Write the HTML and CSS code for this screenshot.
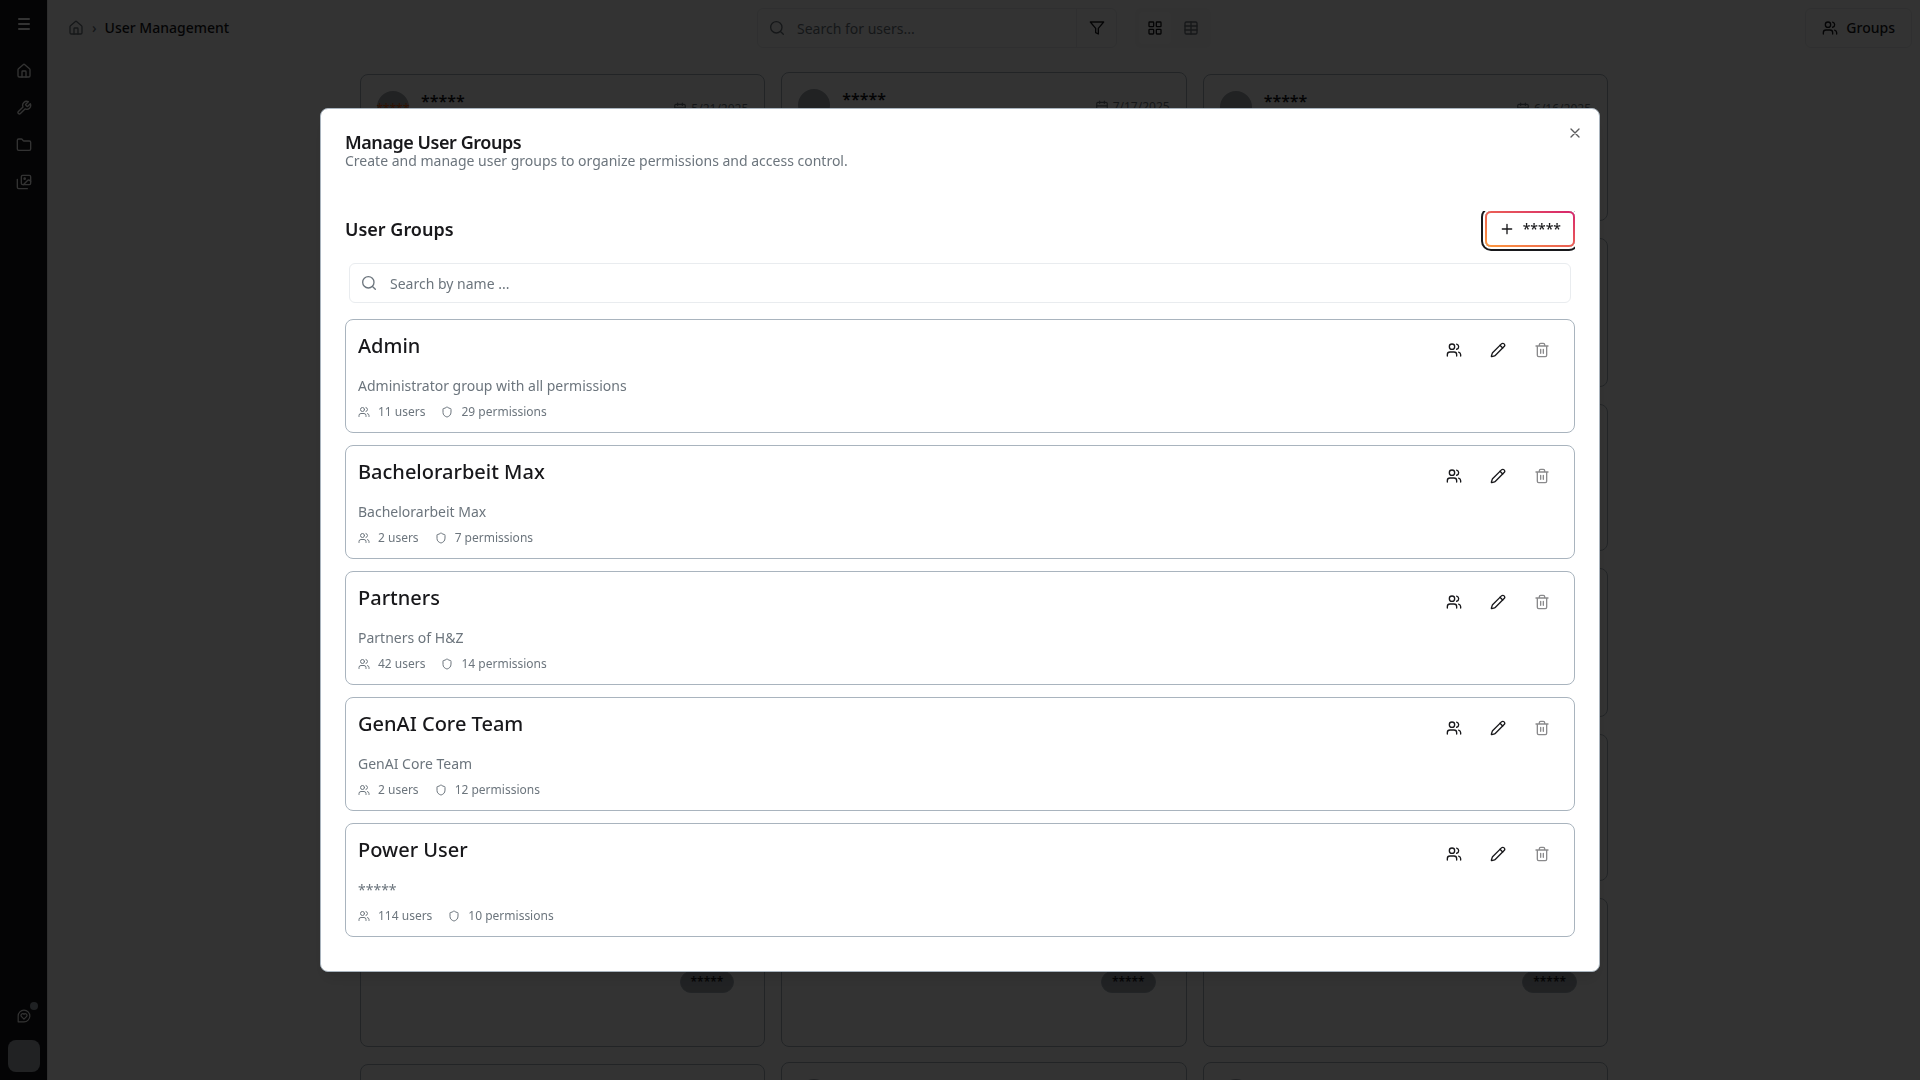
FILE: index.html
```html
<!DOCTYPE html>
<html lang="en">
<head>
<meta charset="utf-8">
<meta name="viewport" content="width=device-width, initial-scale=1">
<title>User Management</title>
<link rel="stylesheet" href="styles.css">
</head>
<body>
<svg class="sprite" aria-hidden="true">
  <symbol id="home" viewBox="0 0 24 24"><path d="M15 21v-8a1 1 0 0 0-1-1h-4a1 1 0 0 0-1 1v8"/><path d="M3 10a2 2 0 0 1 .709-1.528l7-5.999a2 2 0 0 1 2.582 0l7 5.999A2 2 0 0 1 21 10v9a2 2 0 0 1-2 2H5a2 2 0 0 1-2-2z"/></symbol>
  <symbol id="menu" viewBox="0 0 24 24"><path d="M4.500 4.500h15M4.500 12h15M4.500 19.500h15" stroke-width="3"/></symbol>
  <symbol id="wrench" viewBox="0 0 24 24"><path d="M14.700 6.300a1 1 0 0 0 0 1.400l1.600 1.600a1 1 0 0 0 1.400 0l3.770-3.770a6 6 0 0 1-7.940 7.940l-6.910 6.910a2.120 2.120 0 0 1-3-3l6.910-6.910a6 6 0 0 1 7.940-7.940l-3.760 3.760z"/></symbol>
  <symbol id="folder" viewBox="0 0 24 24"><path d="M20 20a2 2 0 0 0 2-2V8a2 2 0 0 0-2-2h-7.900a2 2 0 0 1-1.690-.9L9.600 3.900A2 2 0 0 0 7.930 3H4a2 2 0 0 0-2 2v13a2 2 0 0 0 2 2Z"/></symbol>
  <symbol id="images" viewBox="0 0 24 24"><path d="M17 22H4a2 2 0 0 1-2-2V8"/><rect x="8" y="2" width="14" height="14" rx="2"/><circle cx="13" cy="7" r="1"/><path d="m22 11-1.300-1.300a2.400 2.400 0 0 0-3.400 0L11 16"/></symbol>
  <symbol id="feedback" viewBox="0 0 24 24"><path d="M2 22V12a10 10 0 1 1 10 10z"/><path d="M12 17.500 7.800 13a2.800 2.800 0 0 1 4.200-4 2.800 2.800 0 0 1 4.200 4z"/></symbol>
  <symbol id="search" viewBox="0 0 24 24"><circle cx="11" cy="11" r="8.500"/><path d="m21.500 21.500-4.300-4.300"/></symbol>
  <symbol id="filter" viewBox="0 0 24 24"><path d="M22 3H2l8 9.460V19l4 2v-8.540z"/></symbol>
  <symbol id="grid" viewBox="0 0 24 24"><rect x="3" y="3" width="7" height="7" rx="1"/><rect x="14" y="3" width="7" height="7" rx="1"/><rect x="14" y="14" width="7" height="7" rx="1"/><rect x="3" y="14" width="7" height="7" rx="1"/></symbol>
  <symbol id="table" viewBox="0 0 24 24"><path d="M12 3v18M3 9h18M3 15h18"/><rect x="3" y="3" width="18" height="18" rx="2"/></symbol>
  <symbol id="users" viewBox="0 0 24 24"><path d="M16 21v-2a4 4 0 0 0-4-4H6a4 4 0 0 0-4 4v2"/><circle cx="9" cy="7" r="4"/><path d="M22 21v-2a4 4 0 0 0-3-3.870M16 3.130a4 4 0 0 1 0 7.750"/></symbol>
  <symbol id="calendar" viewBox="0 0 24 24"><path d="M8 2v4M16 2v4M3 10h18"/><rect x="3" y="4" width="18" height="18" rx="2"/></symbol>
  <symbol id="close" viewBox="0 0 24 24"><path d="M18 6 6 18M6 6l12 12"/></symbol>
  <symbol id="plus" viewBox="0 0 24 24"><path d="M5 12h14M12 5v14"/></symbol>
  <symbol id="pencil" viewBox="0 0 24 24"><path d="M21.174 6.812a1 1 0 0 0-3.986-3.987L3.842 16.174a2 2 0 0 0-.5.830l-1.321 4.352a.5.5 0 0 0 .623.622l4.353-1.320a2 2 0 0 0 .830-.497z"/><path d="m15 5 4 4"/></symbol>
  <symbol id="trash" viewBox="0 0 24 24"><path d="M3 6h18M19 6v14a2 2 0 0 1-2 2H7a2 2 0 0 1-2-2V6M8 6V4a2 2 0 0 1 2-2h4a2 2 0 0 1 2 2v2M10 11v6M14 11v6"/></symbol>
  <symbol id="shield" viewBox="0 0 24 24"><path d="M20 13c0 5-3.500 7.500-7.660 8.950a1 1 0 0 1-.670-.010C7.500 20.500 4 18 4 13V6a1 1 0 0 1 1-1c2 0 4.500-1.200 6.240-2.720a1.170 1.170 0 0 1 1.520 0C14.510 3.810 17 5 19 5a1 1 0 0 1 1 1z"/></symbol>
</svg>

<div class="app">
  <nav class="sidebar" aria-label="Main">
    <button class="side-link menu-toggle" aria-label="Menu"><svg class="icon"><use href="#menu"/></svg></button>
    <a class="side-link" href="#" aria-label="Home"><svg class="icon"><use href="#home"/></svg></a>
    <a class="side-link" href="#" aria-label="Tools"><svg class="icon"><use href="#wrench"/></svg></a>
    <a class="side-link" href="#" aria-label="Files"><svg class="icon"><use href="#folder"/></svg></a>
    <a class="side-link" href="#" aria-label="Images"><svg class="icon"><use href="#images"/></svg></a>
    <div class="side-bottom">
      <button class="side-link feedback" aria-label="Feedback"><svg class="icon icon-14"><use href="#feedback"/></svg><span class="dot"></span></button>
      <button class="account" aria-label="Account"></button>
    </div>
  </nav>

  <div class="page">
    <header class="topbar">
      <nav class="breadcrumb" aria-label="Breadcrumb">
        <a href="#" aria-label="Home"><svg class="icon"><use href="#home"/></svg></a>
        <span class="sep">›</span>
        <span class="current">User Management</span>
      </nav>
      <div class="tools">
        <div class="user-search">
          <svg class="icon"><use href="#search"/></svg>
          <input type="text" placeholder="Search for users..." aria-label="Search for users">
          <button class="filter" aria-label="Filter"><svg class="icon"><use href="#filter"/></svg></button>
        </div>
        <div class="view-toggle">
          <button class="active" aria-label="Grid view"><svg class="icon"><use href="#grid"/></svg></button>
          <button aria-label="Table view"><svg class="icon"><use href="#table"/></svg></button>
        </div>
      </div>
      <button class="groups-button"><svg class="icon"><use href="#users"/></svg>Groups</button>
    </header>

    <main class="user-grid">
      <article class="user-card"><div class="user-head"><span class="avatar">*****</span><span class="name">*****</span><span class="date"><svg class="icon icon-14"><use href="#calendar"/></svg>5/21/2025</span></div></article>
      <article class="user-card raised"><div class="user-head"><span class="avatar"></span><span class="name">*****</span><span class="date"><svg class="icon icon-14"><use href="#calendar"/></svg>7/17/2025</span></div></article>
      <article class="user-card"><div class="user-head"><span class="avatar"></span><span class="name">*****</span><span class="date"><svg class="icon icon-14"><use href="#calendar"/></svg>6/16/2025</span></div></article>
      <article class="user-card tall"></article><article class="user-card tall"></article><article class="user-card tall"></article>
      <article class="user-card"></article><article class="user-card"></article><article class="user-card"></article>
      <article class="user-card tall"></article><article class="user-card tall"></article><article class="user-card tall"></article>
      <article class="user-card"></article><article class="user-card"></article><article class="user-card"></article>
      <article class="user-card tall"><div class="user-head"></div><span class="badge">*****</span></article>
      <article class="user-card tall"><div class="user-head"></div><span class="badge">*****</span></article>
      <article class="user-card tall"><div class="user-head"></div><span class="badge">*****</span></article>
      <article class="user-card"><div class="user-head"><span class="avatar"></span></div></article>
      <article class="user-card raised"><div class="user-head"><span class="avatar"></span></div></article>
      <article class="user-card raised"><div class="user-head"><span class="avatar"></span></div></article>
    </main>
  </div>
</div>

<div class="overlay">
  <section class="dialog" role="dialog" aria-modal="true" aria-labelledby="dialog-title">
    <button class="close" aria-label="Close"><svg class="icon"><use href="#close"/></svg></button>
    <header class="dialog-head">
      <h2 id="dialog-title">Manage User Groups</h2>
      <p>Create and manage user groups to organize permissions and access control.</p>
    </header>
    <div class="dialog-body">
      <div class="section-head">
        <h3>User Groups</h3>
        <button class="add-button"><svg class="icon"><use href="#plus"/></svg>*****</button>
      </div>
      <div class="group-search">
        <svg class="icon"><use href="#search"/></svg>
        <input type="text" placeholder="Search by name ..." aria-label="Search by name">
      </div>
      <ul class="groups">
        <li class="group">
          <div class="info"><h4>Admin</h4><p>Administrator group with all permissions</p>
            <div class="stats"><span><svg class="icon icon-12"><use href="#users"/></svg>11 users</span><span><svg class="icon icon-12"><use href="#shield"/></svg>29 permissions</span></div></div>
          <div class="actions"><button aria-label="Members"><svg class="icon"><use href="#users"/></svg></button><button aria-label="Edit"><svg class="icon"><use href="#pencil"/></svg></button><button aria-label="Delete" disabled><svg class="icon"><use href="#trash"/></svg></button></div>
        </li>
        <li class="group">
          <div class="info"><h4>Bachelorarbeit Max</h4><p>Bachelorarbeit Max</p>
            <div class="stats"><span><svg class="icon icon-12"><use href="#users"/></svg>2 users</span><span><svg class="icon icon-12"><use href="#shield"/></svg>7 permissions</span></div></div>
          <div class="actions"><button aria-label="Members"><svg class="icon"><use href="#users"/></svg></button><button aria-label="Edit"><svg class="icon"><use href="#pencil"/></svg></button><button aria-label="Delete" disabled><svg class="icon"><use href="#trash"/></svg></button></div>
        </li>
        <li class="group">
          <div class="info"><h4>Partners</h4><p>Partners of H&amp;Z</p>
            <div class="stats"><span><svg class="icon icon-12"><use href="#users"/></svg>42 users</span><span><svg class="icon icon-12"><use href="#shield"/></svg>14 permissions</span></div></div>
          <div class="actions"><button aria-label="Members"><svg class="icon"><use href="#users"/></svg></button><button aria-label="Edit"><svg class="icon"><use href="#pencil"/></svg></button><button aria-label="Delete" disabled><svg class="icon"><use href="#trash"/></svg></button></div>
        </li>
        <li class="group">
          <div class="info"><h4>GenAI Core Team</h4><p>GenAI Core Team</p>
            <div class="stats"><span><svg class="icon icon-12"><use href="#users"/></svg>2 users</span><span><svg class="icon icon-12"><use href="#shield"/></svg>12 permissions</span></div></div>
          <div class="actions"><button aria-label="Members"><svg class="icon"><use href="#users"/></svg></button><button aria-label="Edit"><svg class="icon"><use href="#pencil"/></svg></button><button aria-label="Delete" disabled><svg class="icon"><use href="#trash"/></svg></button></div>
        </li>
        <li class="group">
          <div class="info"><h4>Power User</h4><p>*****</p>
            <div class="stats"><span><svg class="icon icon-12"><use href="#users"/></svg>114 users</span><span><svg class="icon icon-12"><use href="#shield"/></svg>10 permissions</span></div></div>
          <div class="actions"><button aria-label="Members"><svg class="icon"><use href="#users"/></svg></button><button aria-label="Edit"><svg class="icon"><use href="#pencil"/></svg></button><button aria-label="Delete" disabled><svg class="icon"><use href="#trash"/></svg></button></div>
        </li>
      </ul>
    </div>
  </section>
</div>
</body>
</html>
```
FILE: styles.css
```css
:root {
  --ink: #18181b;
  --muted: #6c757d;
  --line: #a9b4be;
  --line-soft: #e9ecef;
}

* { box-sizing: border-box; margin: 0; padding: 0; }

body {
  font: 14px/20px "Noto Sans", sans-serif;
  color: var(--ink);
  background: #fff;
  overflow: hidden;
}

button, input { font: inherit; color: inherit; background: none; border: 0; outline: 0; }
button { display: inline-flex; align-items: center; justify-content: center; cursor: pointer; }
a { color: inherit; text-decoration: none; }
ul { list-style: none; }
input::placeholder { color: var(--muted); opacity: 1; }

.sprite { display: none; }
.icon {
  flex: none;
  width: 16px;
  height: 16px;
  fill: none;
  stroke: currentColor;
  stroke-width: 2;
  stroke-linecap: round;
  stroke-linejoin: round;
}
.icon-14 { width: 14px; height: 14px; }
.icon-12 { width: 12px; height: 12px; }

/* Page shell */
.app { display: flex; height: 100vh; }

.sidebar {
  display: flex;
  flex-direction: column;
  align-items: center;
  gap: 5px;
  flex: none;
  width: 48px;
  padding: 8px 0;
  color: #fff;
  background: var(--ink);
  border-right: 1px solid #e4e4e7;
}
.side-link { display: flex; align-items: center; justify-content: center; width: 32px; height: 32px; }
.menu-toggle { margin-bottom: 10px; }
.side-bottom { display: flex; flex-direction: column; gap: 8px; margin-top: auto; }
.feedback { position: relative; }
.dot { position: absolute; top: 2px; right: 2px; width: 8px; height: 8px; border-radius: 50%; background: #9ca3af; }
.account { width: 32px; height: 32px; border-radius: 8px; background: #a3a9b0; }

.page { flex: 1; min-width: 0; overflow: hidden; }

.topbar { display: grid; grid-template-columns: 1fr auto 1fr; align-items: center; padding: 8px; }
.breadcrumb { display: flex; align-items: center; gap: 8px; padding-left: 12px; font-weight: 500; }
.breadcrumb a { display: flex; color: var(--muted); }
.sep { color: var(--muted); }

.tools { display: flex; gap: 18px; }
.user-search {
  display: flex;
  align-items: center;
  width: 360px;
  height: 40px;
  padding-left: 11px;
  border: 1px solid var(--line-soft);
  border-radius: 6px;
  color: var(--muted);
}
.user-search input { flex: 1; min-width: 0; padding: 2px 0 0 12px; }
.filter { width: 40px; height: 38px; border-left: 1px solid var(--line-soft); color: var(--ink); }
.view-toggle { display: flex; gap: 4px; padding: 4px; border-radius: 6px; background: #fafafa; color: var(--muted); }
.view-toggle button { width: 32px; height: 32px; border-radius: 4px; }
.view-toggle .active { background: #fff; color: var(--ink); }
.groups-button {
  justify-self: end;
  gap: 8px;
  height: 40px;
  padding: 0 16px;
  border: 1px solid var(--line-soft);
  border-radius: 6px;
  font-weight: 500;
}

/* User cards */
.user-grid {
  display: grid;
  grid-template-columns: repeat(3, 1fr);
  align-items: start;
  gap: 17px 16px;
  max-width: 1280px;
  margin: 0 auto;
  padding: 18px 16px;
}
.user-card { height: 147px; padding: 16px; border: 1px solid var(--line); border-radius: 8px; }
.user-card.tall { height: 149px; }
.user-card.raised { margin-top: -2px; }
.user-head { display: flex; gap: 12px; min-height: 32px; }
.avatar {
  display: flex;
  justify-content: center;
  flex: none;
  width: 32px;
  height: 32px;
  border-radius: 50%;
  background: #a3a9b0;
  color: #e8590c;
  font-size: 12px;
  line-height: 36px;
}
.name { font-size: 16px; line-height: 20px; font-weight: 600; }
.date { display: flex; align-items: center; gap: 4px; height: 16px; margin: 10px 0 0 auto; font-size: 12px; color: var(--muted); }
.badge {
  display: block;
  width: fit-content;
  margin: 24px 14px 0 auto;
  padding: 2px 10px;
  border: 1px solid var(--line);
  border-radius: 12px;
  background: #a3a9b0;
  font-size: 12px;
  line-height: 16px;
  font-weight: 600;
}

/* Dialog */
.overlay {
  position: fixed;
  inset: 0;
  display: flex;
  align-items: center;
  justify-content: center;
  background: rgb(0 0 0 / 80%);
}
.dialog {
  position: relative;
  display: flex;
  flex-direction: column;
  gap: 40px;
  width: 100%;
  max-width: 1280px;
  height: 80vh;
  padding: 24px;
  border: 1px solid var(--line);
  border-radius: 8px;
  background: #fff;
  box-shadow: 0 10px 15px -3px rgb(0 0 0 / 10%), 0 4px 6px -4px rgb(0 0 0 / 10%);
}
.close { position: absolute; top: 16px; right: 16px; opacity: .7; }
.dialog-head h2 { font-size: 18px; line-height: 18px; font-weight: 600; letter-spacing: -0.025em; }
.dialog-head p { color: var(--muted); }
.dialog-body { display: flex; flex-direction: column; gap: 16px; flex: 1; min-height: 0; overflow: auto; }

.section-head { display: flex; align-items: center; justify-content: space-between; }
.section-head h3 { font-size: 18px; line-height: 28px; font-weight: 600; }
.add-button {
  gap: 8px;
  height: 36px;
  padding: 0 12px;
  border: 2px solid transparent;
  border-radius: 6px;
  background: linear-gradient(#fff, #fff) padding-box, linear-gradient(to top right, #ff9a3c, #d6246e) border-box;
  box-shadow: 0 0 0 2px #fff, 0 0 0 4px var(--ink);
  font-weight: 500;
}

.group-search {
  display: flex;
  align-items: center;
  height: 40px;
  flex: none;
  margin: 0 4px;
  padding: 0 11px;
  border: 1px solid var(--line-soft);
  border-radius: 6px;
  color: var(--muted);
}
.group-search input { flex: 1; padding: 2px 0 0 13px; }

.groups { display: flex; flex-direction: column; gap: 12px; }
.group { display: flex; justify-content: space-between; align-items: flex-start; padding: 12px; border: 1px solid var(--line); border-radius: 8px; }
.group h4 { margin-bottom: 16px; font-size: 20px; line-height: 28px; font-weight: 500; }
.group p { margin-bottom: 8px; color: var(--muted); }
.stats { display: flex; gap: 16px; font-size: 12px; line-height: 16px; color: var(--muted); }
.stats span { display: flex; align-items: center; gap: 8px; }
.actions { display: flex; gap: 4px; }
.actions button { width: 40px; height: 36px; }
.actions button:disabled { opacity: .5; cursor: default; }
```
